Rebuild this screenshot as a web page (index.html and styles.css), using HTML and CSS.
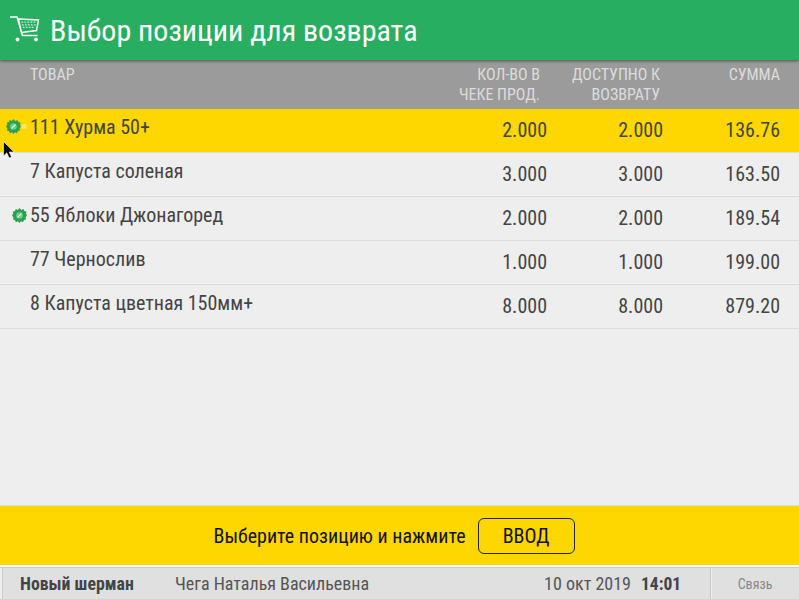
FILE: index.html
```html
<!DOCTYPE html>
<html lang="ru">
<head>
  <meta charset="UTF-8" />
  <title>Выбор позиции для возврата</title>
  <link rel="stylesheet" href="styles.css">
</head>
<body>
  <div class="screen">
    <div class="header">
      <svg class="cart-icon" width="32" height="32" viewBox="0 0 32 32">
        <path d="M0 3H7L12.500 21.500H27.500" fill="none" stroke="#fff" stroke-width="1.500"/>
        <path d="M8.500 5L28.500 6L26.500 16.500L11.500 18.500Z" fill="#27ae60" stroke="#fff" stroke-width="1.400"/>
        <path d="M11.500 8.200H26.500M12 10.800H26M12.800 13.400H24" stroke="#cdeeda" stroke-width="1.300" stroke-dasharray="1.700 1.300"/>
        <circle cx="7.500" cy="25.500" r="1.900" fill="#fff"/>
        <circle cx="26" cy="25.500" r="1.900" fill="#fff"/>
      </svg>
      <h1>Выбор позиции для возврата</h1>
    </div>

    <div class="row head-row">
      <div class="name">ТОВАР</div>
      <div class="col-qty">КОЛ-ВО В<br>ЧЕКЕ ПРОД.</div>
      <div class="col-ret">ДОСТУПНО К<br>ВОЗВРАТУ</div>
      <div class="col-sum">СУММА</div>
    </div>

    <div class="list">
      <div class="row item selected">
        <svg class="promo" width="24" height="16" viewBox="0 0 24 16">
          <circle cx="18" cy="7.500" r="2.500" fill="#fff" opacity=".45"/>
          <use href="#badge"/>
        </svg>
        <div class="name">111 Хурма 50+</div>
        <div class="col-qty">2.000</div>
        <div class="col-ret">2.000</div>
        <div class="col-sum">136.76</div>
      </div>
      <div class="row item">
        <div class="name">7 Капуста соленая</div>
        <div class="col-qty">3.000</div>
        <div class="col-ret">3.000</div>
        <div class="col-sum">163.50</div>
      </div>
      <div class="row item">
        <svg class="promo promo-shifted" width="16" height="16" viewBox="0 0 16 16"><use href="#badge"/></svg>
        <div class="name">55 Яблоки Джонагоред</div>
        <div class="col-qty">2.000</div>
        <div class="col-ret">2.000</div>
        <div class="col-sum">189.54</div>
      </div>
      <div class="row item">
        <div class="name">77 Чернослив</div>
        <div class="col-qty">1.000</div>
        <div class="col-ret">1.000</div>
        <div class="col-sum">199.00</div>
      </div>
      <div class="row item">
        <div class="name">8 Капуста цветная 150мм+</div>
        <div class="col-qty">8.000</div>
        <div class="col-ret">8.000</div>
        <div class="col-sum">879.20</div>
      </div>
    </div>

    <div class="prompt">
      <span>Выберите позицию и нажмите</span>
      <div class="enter-btn">ВВОД</div>
    </div>

    <div class="status">
      <div class="shop">Новый шерман</div>
      <div class="cashier">Чега Наталья Васильевна</div>
      <div class="date">10 окт 2019</div>
      <div class="time">14:01</div>
      <div class="link">Связь</div>
    </div>
  </div>

  <svg class="defs" width="0" height="0">
    <defs>
      <g id="badge">
        <path d="M7.500 0L9.300 1.900L11.500 1L12.300 3.100L14.500 3.400L14.100 5.600L15 7.500L13.600 9.300L14 11.500L11.900 12L11 14.200L9 13.300L7.500 15L5.800 13.300L3.800 14.200L3 12L.9 11.500L1.400 9.300L0 7.500L1.300 5.600L.9 3.400L3 3.100L3.800 1L5.800 1.900Z" fill="#2ba14f"/>
        <circle cx="7.500" cy="7.500" r="3.300" fill="#6fcb90"/>
        <path d="M5.500 9.500L9.500 5.500" stroke="#d8f3e0" stroke-width="1.100"/>
      </g>
    </defs>
  </svg>
  <svg class="cursor" width="12" height="18" viewBox="0 0 12 18">
    <path d="M.5 .5V15L3.800 11.800L6.200 17L8.500 16L6.200 11H11Z" fill="#000" stroke="#fff" stroke-width=".6"/>
  </svg>
</body>
</html>
```

FILE: styles.css
```css
* {
  box-sizing: border-box;
  margin: 0;
  padding: 0;
}
body {
  font-family: Roboto, sans-serif;
  font-stretch: 75%;
  background: #eee;
  color: #444;
  overflow: hidden;
}
.screen {
  display: flex;
  flex-direction: column;
  height: 599px;
}
.header {
  display: flex;
  align-items: center;
  gap: 8px;
  height: 60px;
  padding-left: 10px;
  background: #27ae60;
  box-shadow: 0 1px 3px rgba(0, 0, 0, 0.5);
  color: #fff;
  position: relative;
  z-index: 1;
}
.header h1 {
  font-size: 30px;
  font-weight: 400;
}
.row {
  display: grid;
  grid-template-columns: 1fr 120px 116px 117px;
  padding: 0 19px 0 30px;
  position: relative;
}
.head-row {
  height: 49px;
  padding-top: 5px;
  background: #9b9b9b;
  color: #ddd;
  font-size: 16px;
  line-height: 20px;
}
.col-qty, .col-ret, .col-sum {
  text-align: right;
}
.head-row .col-qty {
  padding-right: 7px;
}
.head-row .col-ret {
  padding-right: 3px;
}
.list {
  flex: 1;
}
.item {
  height: 44px;
  align-items: center;
  border-bottom: 1px solid #ddd;
  font-size: 20px;
}
.item > div {
  margin-top: -2px;
}
.item .name {
  margin-top: -7px;
}
.item.selected {
  background: #ffd700;
  color: #444;
}
.promo {
  position: absolute;
  left: 6px;
  top: 10px;
}
.promo-shifted {
  left: 12px;
  top: 11px;
}
.prompt {
  display: flex;
  align-items: center;
  justify-content: center;
  gap: 12px;
  height: 62px;
  padding-right: 11px;
  background: #ffd700;
  border-top: 1px solid #ddd;
  border-bottom: 2px solid #fff;
  color: #111;
  font-size: 20px;
}
.enter-btn {
  display: flex;
  align-items: center;
  justify-content: center;
  width: 97px;
  height: 36px;
  border: 1px solid #222;
  border-radius: 6px;
}
.status {
  display: flex;
  align-items: center;
  height: 32px;
  padding-left: 20px;
  background: #e0e0e0;
  border-top: 1px solid #ccc;
  box-shadow: inset 2px 0 0 #eee, inset 3px 0 0 #ccc;
  font-size: 18px;
  color: #555;
}
.shop {
  width: 155px;
  font-size: 17.800px;
  font-weight: 700;
  color: #444;
}
.cashier {
  flex: 1;
}
.time {
  margin-left: 10px;
  width: 69px;
  font-size: 17.500px;
  font-weight: 700;
  color: #444;
}
.link {
  display: flex;
  align-items: center;
  justify-content: center;
  align-self: stretch;
  width: 89px;
  border-left: 1px solid #c8c8c8;
  box-shadow: inset 1px 0 0 #eee;
  font-size: 14px;
  color: #888;
}
.defs {
  position: absolute;
}
.cursor {
  position: absolute;
  left: 3px;
  top: 141px;
}
```
